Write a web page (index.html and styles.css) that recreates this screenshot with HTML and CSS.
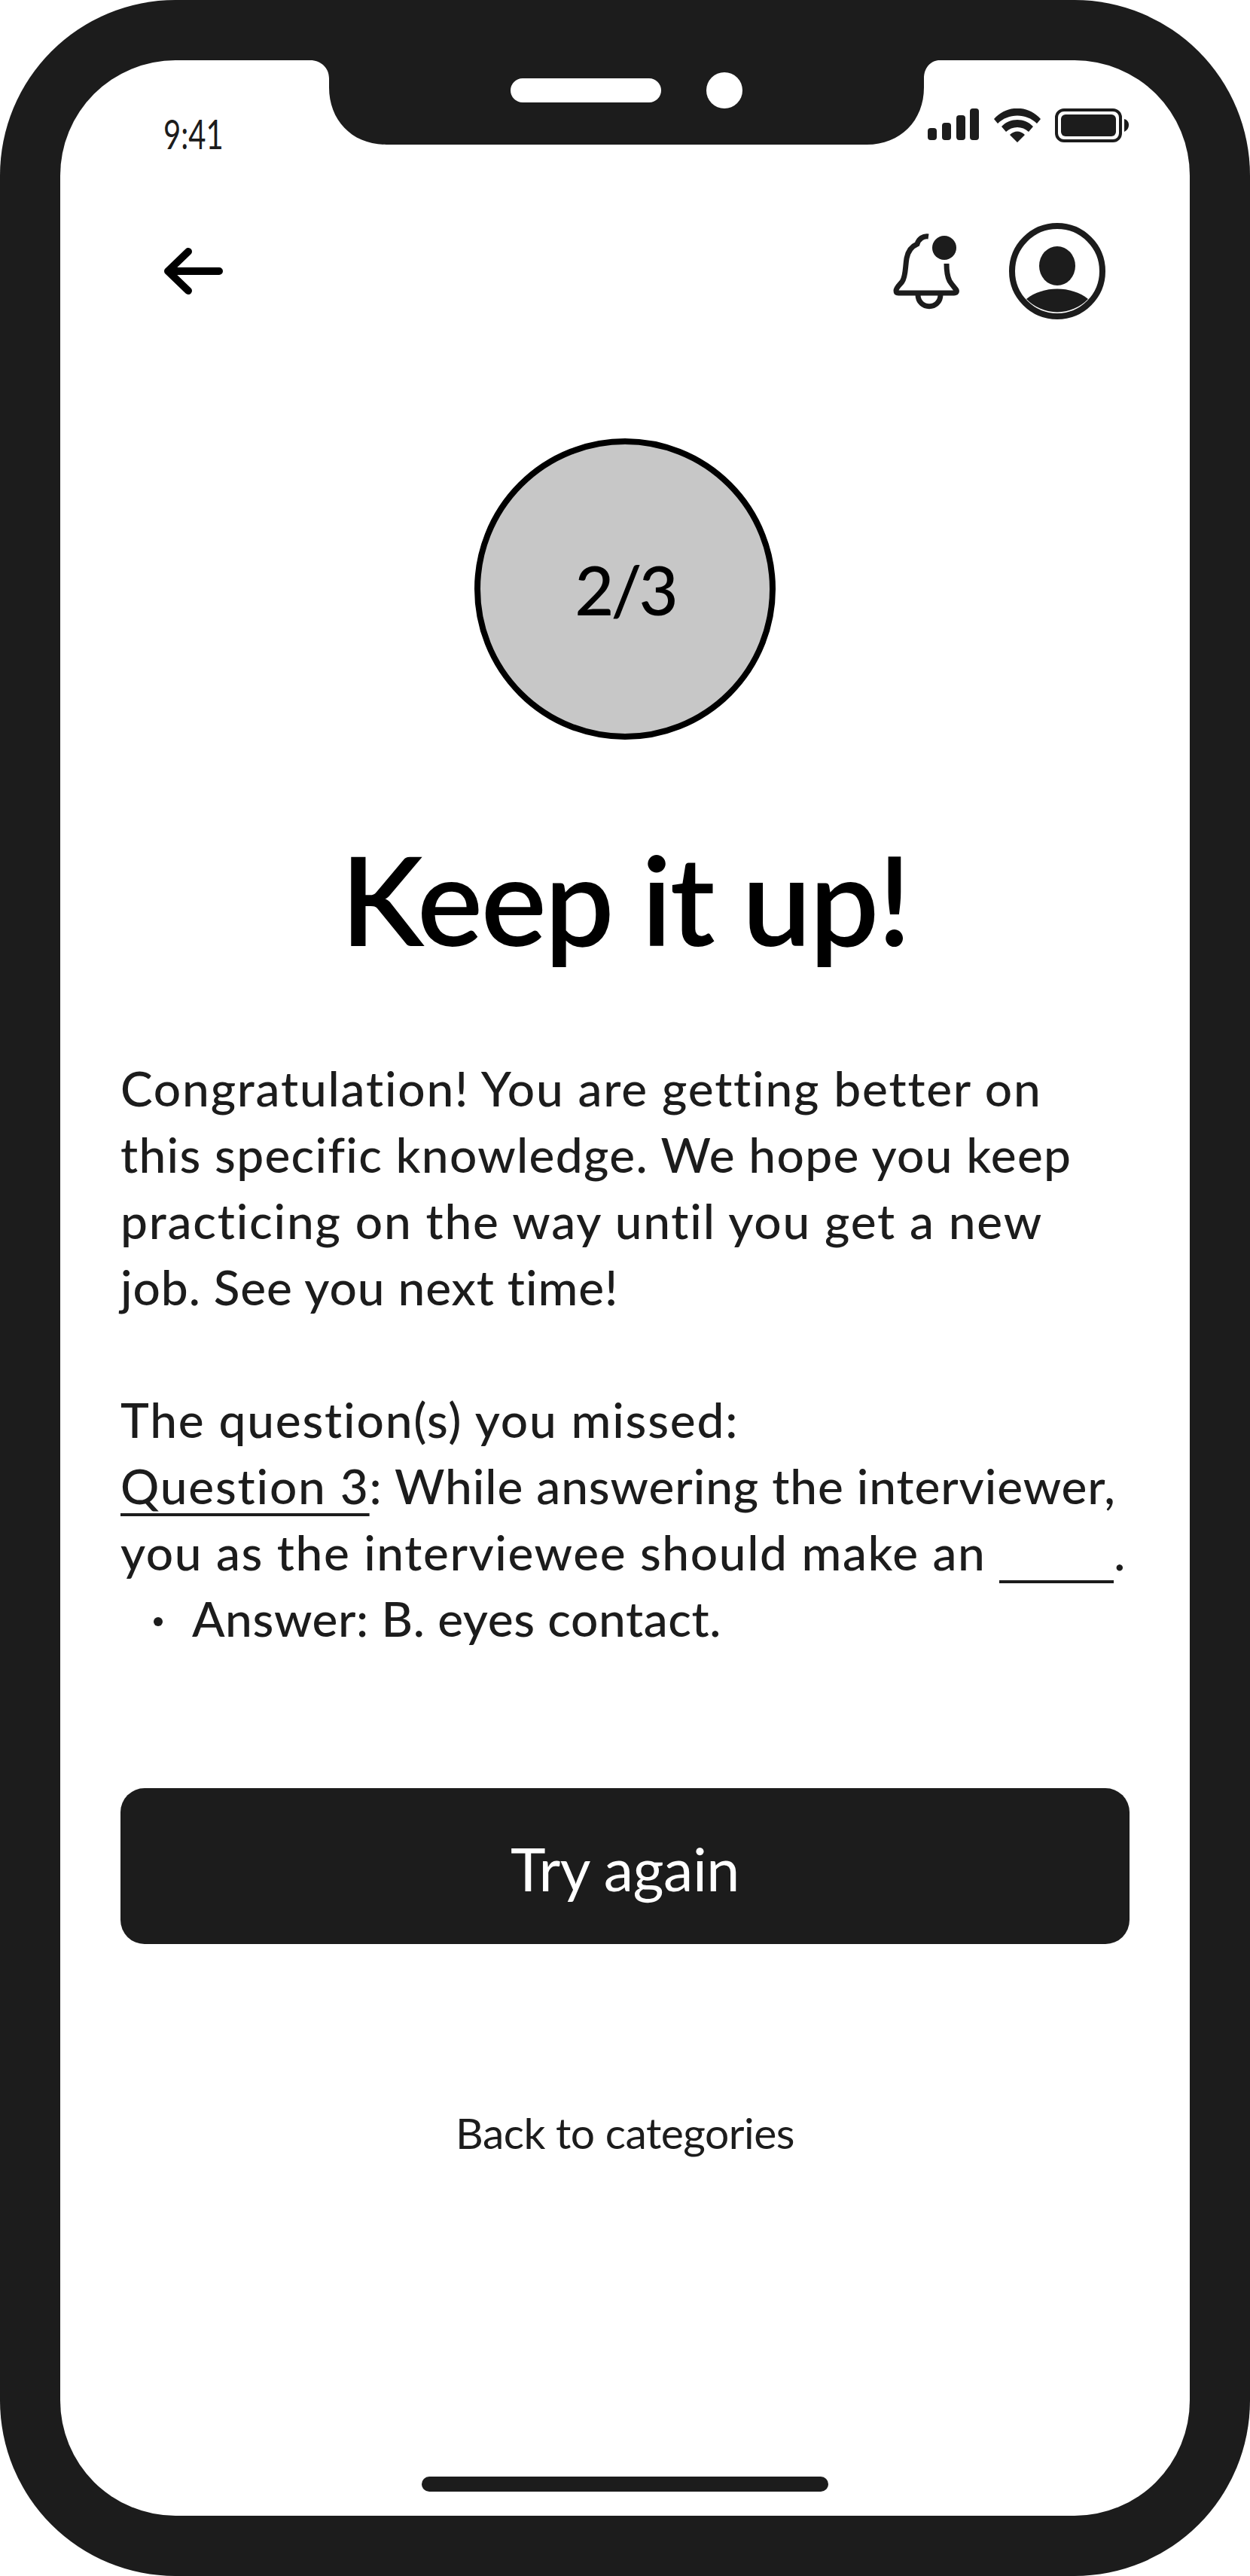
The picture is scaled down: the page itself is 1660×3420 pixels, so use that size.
FILE: index.html
```html
<!DOCTYPE html>
<html>
<head>
<meta charset="utf-8">
<title>Keep it up</title>
<link rel="stylesheet" href="styles.css">
</head>
<body>
<div class="phone">
    <div class="screen">
        <!-- notch -->
        <svg class="notch" width="836" height="112" viewBox="0 0 836 112">
            <path fill="#1c1c1c" d="M0 0 C14 0 25 10 25 24 L25 36 C25 80 56 112 101 112 L739 112 C784 112 815 80 815 36 L815 24 C815 10 824 0 836 0 Z"/>
            <rect x="266" y="24" width="200" height="32" rx="16" fill="#fff"/>
            <circle cx="550" cy="40" r="24" fill="#fff"/>
        </svg>

        <div class="status-bar">
            <span class="time">9:41</span>
            <svg width="268" height="46" viewBox="0 0 268 46">
                <rect x="0" y="26" width="12" height="16" rx="4" fill="#1c1c1c"/>
                <rect x="19" y="19" width="12" height="23" rx="4" fill="#1c1c1c"/>
                <rect x="38" y="9" width="12" height="33" rx="4" fill="#1c1c1c"/>
                <rect x="56" y="0" width="12" height="42" rx="4" fill="#1c1c1c"/>
                <path fill="#1c1c1c" d="M88 14 C105 -5 133 -5 150 14 L145 20 C131 6 107 6 93 20 Z M98 24 C109 12 129 12 140 24 L134 31 C126 23 112 23 104 31 Z M109 35 C115 29 123 29 129 35 L119 45 Z"/>
                <rect x="171" y="2" width="85" height="41" rx="10" fill="none" stroke="#1c1c1c" stroke-width="4"/>
                <rect x="177" y="8" width="73" height="29" rx="6" fill="#1c1c1c"/>
                <path fill="#1c1c1c" d="M261 14 C265 15 267 18 267 22 C267 26 265 29 261 31 Z"/>
            </svg>
        </div>

        <div class="top-bar">
            <svg width="80" height="64" viewBox="0 0 80 64">
                <path d="M74 32 L6 32 M33 6 L6 32 L33 58" fill="none" stroke="#000" stroke-width="10" stroke-linecap="round" stroke-linejoin="round"/>
            </svg>
            <div class="top-icons">
                <svg width="96" height="106" viewBox="0 0 96 106">
                    <path d="M51 7 C44 6 38 10 36 17 C29 20 24 25 22 36 C20 48 21 60 16 67 C12 72 8 75 8 79 C8 81 9 82 11 82 L85 82 C88 82 89 80 88 78 C86 75 82 71 79 66 C76 60 75 52 75 43" fill="none" stroke="#1c1c1c" stroke-width="7"/>
                    <path d="M37 84 C37 105 67 105 67 84" fill="none" stroke="#1c1c1c" stroke-width="7"/>
                    <circle cx="72" cy="22" r="16" fill="#1c1c1c"/>
                </svg>
                <svg width="128" height="128" viewBox="0 0 128 128">
                    <circle cx="64" cy="64" r="60" fill="none" stroke="#1c1c1c" stroke-width="8"/>
                    <ellipse cx="64" cy="57" rx="24" ry="26" fill="#1c1c1c"/>
                    <path fill="#1c1c1c" d="M23 101 C45 83 83 83 105 101 A57 57 0 0 1 23 101 Z"/>
                </svg>
            </div>
        </div>

        <div class="progress">2/3</div>
        <h1 class="title">Keep it up!</h1>

        <div class="message">
            <p><span class="loose">Congratulation! You are getting better on</span><br>
            this specific knowledge. We hope you keep<br>
            <span class="loose">practicing on the way until you get a new</span><br>
            <span class="tight">job. See you next time!</span></p>
            <p class="missed"><span class="loose">The question(s) you missed:</span><br>
            <span class="tight"><u>Question 3</u>: While answering the interviewer,</span><br>
            <span class="mid">you as the interviewee should make an <span class="blank"></span>.</span></p>
            <ul>
                <li>Answer: B. eyes contact.</li>
            </ul>
        </div>

        <button class="btn">Try again</button>
        <a class="back-link">Back to categories</a>
        <div class="home-bar"></div>
    </div>
</div>
</body>
</html>
```
FILE: styles.css
```css
* {
    box-sizing: border-box;
}

html, body {
    margin: 0;
    padding: 0;
    background-color: #fff;
}

.phone {
    width: 1660px;
    height: 3420px;
    padding: 80px;
    background-color: #1c1c1c;
    border-radius: 233px;
}

.screen {
    position: relative;
    height: 3260px;
    background-color: #fff;
    border-radius: 153px;
    display: flex;
    flex-direction: column;
    padding: 0 80px;
}

.notch {
    position: absolute;
    top: 0;
    left: 332px;
}

.status-bar {
    height: 120px;
    padding: 64px 0 0 57px;
    display: flex;
    justify-content: space-between;
}

.time {
    height: 48px;
    margin-top: 1px;
    font-family: Lato, sans-serif;
    font-size: 40px;
    line-height: 48px;
    color: #1c1c1c;
    transform: scale(1, 1.35);
    transform-origin: left top;
}

.top-bar {
    height: 128px;
    margin-top: 96px;
    padding-left: 57px;
    margin-right: 32px;
    display: flex;
    justify-content: space-between;
    align-items: center;
}

.top-icons {
    display: flex;
    align-items: center;
    gap: 62px;
}

.progress {
    width: 400px;
    height: 400px;
    margin: 158px auto 0;
    border: 8px solid #000;
    border-radius: 50%;
    background-color: #c7c7c7;
    display: flex;
    align-items: center;
    justify-content: center;
    font-family: Lato, sans-serif;
    font-size: 90px;
    font-weight: 500;
    letter-spacing: -4px;
    color: #000;
}

.title {
    margin: 116px 0 0;
    font-family: Lato, sans-serif;
    font-size: 164px;
    font-weight: 600;
    line-height: 190px;
    text-align: center;
    letter-spacing: -2.5px;
    color: #000;
}

.message {
    margin-top: 113px;
    font-family: Lato, sans-serif;
    font-size: 64px;
    font-weight: 500;
    line-height: 88px;
    letter-spacing: 1.3px;
    white-space: nowrap;
    font-variant-ligatures: none;
    color: #1c1c1c;
}

.message p {
    margin: 0;
}

.message .missed {
    margin-top: 88px;
}

.loose {
    letter-spacing: 1.8px;
}

.mid {
    letter-spacing: 1.6px;
}

.tight {
    letter-spacing: 0.9px;
}

.message u {
    letter-spacing: 1.8px;
    text-decoration-thickness: 4px;
    text-decoration-skip-ink: none;
    text-underline-offset: 12px;
}

.message ul {
    margin: 0;
    padding: 0 0 0 44px;
    list-style: none;
}

.message li {
    display: flex;
    gap: 39px;
    letter-spacing: 0.6px;
}

.message li::before {
    content: "";
    width: 12px;
    height: 12px;
    margin-top: 42px;
    border-radius: 50%;
    background-color: #1c1c1c;
}

.blank {
    display: inline-block;
    width: 152px;
    border-bottom: 4px solid #1c1c1c;
    vertical-align: -17px;
}

.btn {
    width: 100%;
    height: 207px;
    margin-top: 181px;
    padding-top: 6px;
    border: none;
    border-radius: 32px;
    background-color: #1c1c1c;
    color: white;
    font-family: Lato, sans-serif;
    font-size: 79px;
    letter-spacing: -0.5px;
}

.back-link {
    margin-top: 216px;
    text-align: center;
    font-family: Lato, sans-serif;
    font-size: 57px;
    letter-spacing: -0.5px;
    color: #1c1c1c;
}

.home-bar {
    position: absolute;
    left: 480px;
    bottom: 32px;
    width: 540px;
    height: 20px;
    border-radius: 10px;
    background-color: #1c1c1c;
}
```
